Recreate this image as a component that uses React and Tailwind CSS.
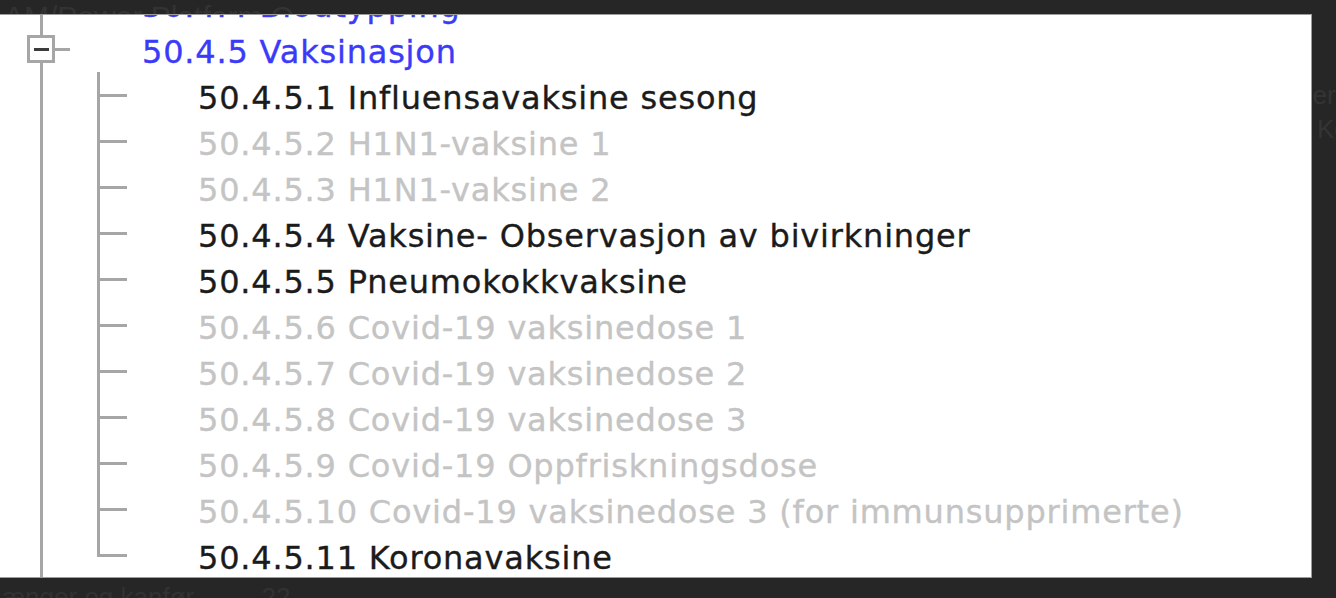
import React from "react";

const items = [
  { text: "50.4.5.1 Influensavaksine sesong", active: true },
  { text: "50.4.5.2 H1N1-vaksine 1", active: false },
  { text: "50.4.5.3 H1N1-vaksine 2", active: false },
  { text: "50.4.5.4 Vaksine- Observasjon av bivirkninger", active: true },
  { text: "50.4.5.5 Pneumokokkvaksine", active: true },
  { text: "50.4.5.6 Covid-19 vaksinedose 1", active: false },
  { text: "50.4.5.7 Covid-19 vaksinedose 2", active: false },
  { text: "50.4.5.8 Covid-19 vaksinedose 3", active: false },
  { text: "50.4.5.9 Covid-19 Oppfriskningsdose", active: false },
  { text: "50.4.5.10 Covid-19 vaksinedose 3 (for immunsupprimerte)", active: false },
  { text: "50.4.5.11 Koronavaksine", active: true },
];

// outer trunk line (level 1)
function Trunk() {
  return (
    <div className="w-[70px] h-full shrink-0 pl-[40px]">
      <div className="w-[3px] h-full bg-[#a6a6a6]" />
    </div>
  );
}

function ChildRow({ text, active, last }) {
  return (
    <div className="flex h-[46px]">
      <Trunk />
      <div className="w-[128px] shrink-0 pl-[27px] flex flex-col">
        <div className="w-[30px] h-[25px] border-l-[3px] border-b-[3px] border-[#a6a6a6]" />
        <div className={"w-[30px] flex-1 " + (last ? "" : "border-l-[3px] border-[#a6a6a6]")} />
      </div>
      <div
        className={
          "leading-[46px] translate-y-[3px] whitespace-nowrap " +
          (active ? "text-[#1b1b1b]" : "text-[#c4c4c4]")
        }
      >
        {text}
      </div>
    </div>
  );
}

function ParentRow({ text, open }) {
  return (
    <div className="flex h-[46px]">
      <div className="w-[70px] shrink-0 flex flex-col">
        <div className="ml-[40px] w-[3px] h-[9px] bg-[#a6a6a6]" />
        <div className="flex items-center h-[28px] pl-[27px]">
          <div className="w-[28px] h-[28px] border-[3px] border-[#a6a6a6] bg-white flex items-center justify-center">
            {open && <div className="w-[15px] h-[3px] bg-[#3c3c3c]" />}
          </div>
          <div className="flex-1 h-[3px] bg-[#a6a6a6]" />
        </div>
        <div className="ml-[40px] w-[3px] flex-1 bg-[#a6a6a6]" />
      </div>
      <div className="w-[72px] shrink-0" />
      <div className="leading-[46px] translate-y-[3px] whitespace-nowrap text-[#3a3af8]">{text}</div>
    </div>
  );
}

export default function App() {
  return (
    <div className="relative w-[1336px] h-[598px] bg-[#262626] overflow-hidden font-['DejaVu_Sans',sans-serif]">
      {/* faint window behind the overlay */}
      <div className="absolute left-[4px] top-[2px] text-[30px] leading-none text-[#333333] font-['Liberation_Sans',sans-serif] whitespace-nowrap">
        AM/Power Platform Q
      </div>
      <div className="absolute left-[1298px] top-[78px] text-[26px] leading-[34px] text-[#343434] font-['Liberation_Sans',sans-serif] whitespace-nowrap">
        <div>ner</div>
        <div className="pl-[19px]">Ko</div>
      </div>
      <div className="absolute left-[2px] top-[584px] text-[26px] leading-none text-[#323232] font-['Liberation_Sans',sans-serif] whitespace-nowrap">
        ænger og kanfør <span className="pl-[60px]">22</span>
      </div>

      <div className="pt-[14px]">
        <div className="relative w-[1312px] h-[564px] bg-white border-t border-r border-b border-[#9c9c9c] overflow-hidden text-[32px] tracking-[0.8px] [-webkit-text-stroke:0.35px_currentColor]">
          <div className="-mt-[35px]">
            <div className="flex h-[46px]">
              <Trunk />
              <div className="w-[72px] shrink-0" />
              <div className="leading-[46px] translate-y-[3px] whitespace-nowrap text-[#3a3af8]">
                50.4.4 Blodtypping
              </div>
            </div>
            <ParentRow text="50.4.5 Vaksinasjon" open />
            {items.map((it, i) => (
              <ChildRow key={it.text} text={it.text} active={it.active} last={i === items.length - 1} />
            ))}
            <div className="flex h-[46px]">
              <Trunk />
            </div>
          </div>
        </div>
      </div>
    </div>
  );
}
